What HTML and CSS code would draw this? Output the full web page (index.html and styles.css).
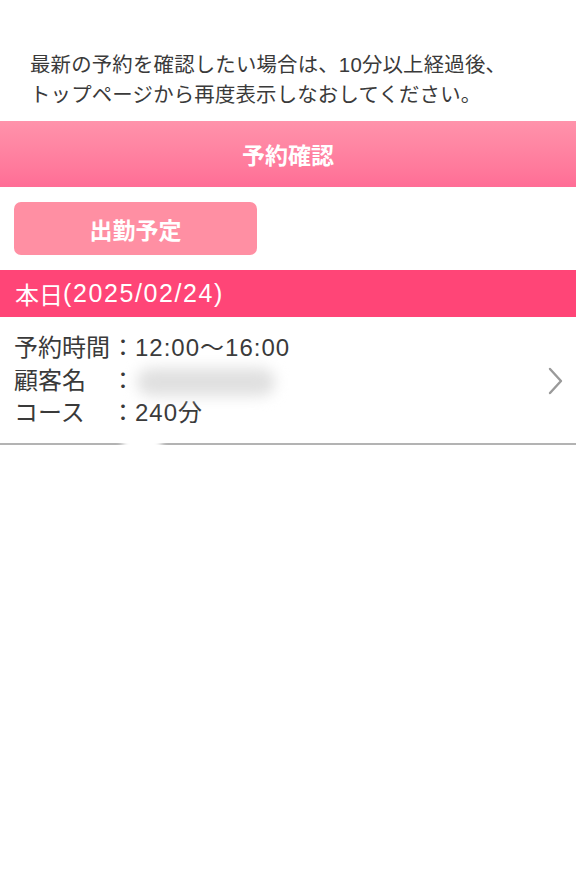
FILE: index.html
```html
<!DOCTYPE html>
<html lang="ja">
<head>
<meta charset="utf-8">
<title>予約確認</title>
<link rel="stylesheet" href="styles.css">
</head>
<body>
<div class="page">
  <p class="notice">最新の予約を確認したい場合は、10分以上経過後、<br>トップページから再度表示しなおしてください。</p>
  <div class="title-bar">予約確認</div>
  <div class="btn-row"><button class="btn-schedule">出勤予定</button></div>
  <div class="date-bar">本日<span class="date-num">(2025/02/24)</span></div>
  <div class="reservation">
    <div class="res-info">
      <div class="res-line"><span class="res-label">予約時間</span><span class="res-colon">：</span><span class="res-value">12:00〜16:00</span></div>
      <div class="res-line"><span class="res-label">顧客名</span><span class="res-colon">：</span><span class="res-value"><span class="blurred"></span></span></div>
      <div class="res-line"><span class="res-label">コース</span><span class="res-colon">：</span><span class="res-value">240分</span></div>
    </div>
    <svg class="chevron" width="16" height="28" viewBox="0 0 16 28"><path d="M2 2 L13 14 L2 26" fill="none" stroke="#9a9a9a" stroke-width="2.4" stroke-linecap="round" stroke-linejoin="round"/></svg>
    <span class="smudge"></span>
  </div>
</div>
</body>
</html>
```
FILE: styles.css
```css
* { box-sizing: border-box; }
html, body { margin: 0; padding: 0; background: #fff; }
body {
  font-family: "Liberation Sans", "Noto Sans CJK JP", sans-serif;
  color: #333;
}
.page { width: 576px; }
.notice {
  margin: 0;
  padding: 50px 0 0 30px;
  font-size: 20.4px;
  line-height: 30px;
  color: #3a3a3a;
  letter-spacing: 0.2px;
}
.title-bar {
  margin-top: 11px;
  height: 66px;
  background: linear-gradient(to bottom, #ff93ab 0%, #ff7a9c 70%, #ff6d96 100%);
  color: #fff;
  font-weight: bold;
  font-size: 23px;
  display: flex;
  align-items: center;
  justify-content: center;
}
.btn-row { padding: 15px 14px 15px; }
.btn-schedule {
  display: block;
  width: 243px;
  height: 53px;
  border: none;
  border-radius: 7px;
  background: #ff8fa3;
  color: #fff;
  font-family: inherit;
  font-weight: bold;
  font-size: 23px;
  padding: 0;
}
.date-bar {
  height: 47px;
  background: #ff4577;
  color: #fff;
  font-size: 24px;
  display: flex;
  align-items: center;
  padding-left: 15px;
}
.date-num { font-size: 25px; letter-spacing: 1.6px; }
.reservation {
  position: relative;
  display: flex;
  align-items: center;
  justify-content: space-between;
  border-bottom: 2px solid #b3b3b3;
  padding: 15px 12px 13px 14px;
}
.res-info { display: flex; flex-direction: column; }
.res-line {
  display: flex;
  font-size: 24px;
  line-height: 32.5px;
  height: 32.5px;
  color: #3a3a3a;
}
.res-label { width: 97px; }
.res-colon { width: 23px; text-align: center; }
.res-value { padding-left: 1px; letter-spacing: 1px; }
.blurred {
  display: inline-block;
  width: 138px;
  height: 28px;
  margin-top: 3px;
  margin-left: 2px;
  border-radius: 14px;
  background: #e0e0e0;
  filter: blur(7px);
}
.chevron { display: block; }
.smudge {
  position: absolute;
  left: 122px;
  bottom: -12px;
  width: 40px;
  height: 24px;
  border-radius: 12px;
  background: #fff;
  filter: blur(3px);
}
```
